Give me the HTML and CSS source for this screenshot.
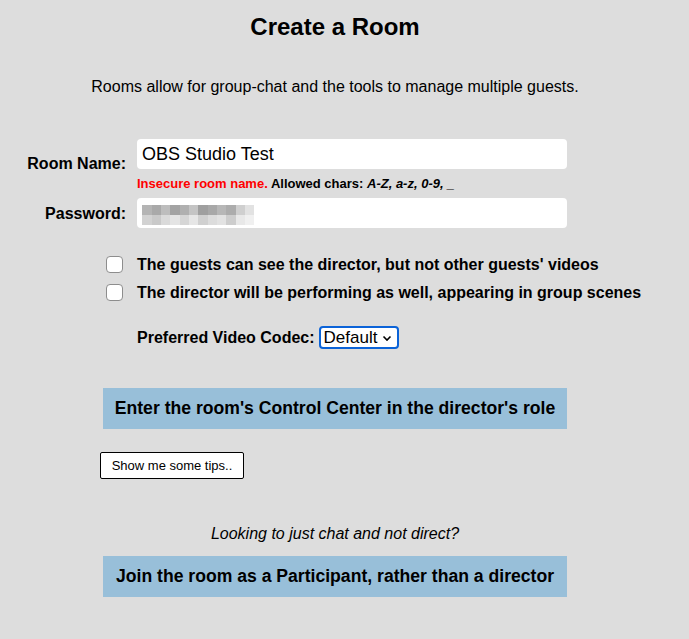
FILE: index.html
```html
<!DOCTYPE html>
<html lang="en">
<head>
    <meta charset="UTF-8">
    <meta name="viewport" content="width=device-width, initial-scale=1.0">
    <title>Create a Room</title>
    <link rel="stylesheet" href="styles.css">
</head>
<body>
    <div class="page">
        <h1>Create a Room</h1>
        <p class="intro">Rooms allow for group-chat and the tools to manage multiple guests.</p>

        <form action="#" id="form-room">
            <div class="fila">
                <label for="room" class="etiqueta etiqueta-room">Room Name:</label>
                <div class="campo">
                    <input type="text" id="room" name="room" value="OBS Studio Test">
                    <div class="aviso"><span class="rojo">Insecure room name.</span> Allowed chars: <i>A-Z, a-z, 0-9, _</i></div>
                </div>
            </div>
            <div class="fila">
                <label for="password" class="etiqueta etiqueta-pass">Password:</label>
                <div class="campo">
                    <input type="text" id="password" name="password" class="pass-oculto" aria-label="password (hidden)">
                </div>
            </div>

            <div class="opciones">
                <label class="check"><input type="checkbox" name="broadcast"> The guests can see the director, but not other guests' videos</label>
                <label class="check"><input type="checkbox" name="showdirector"> The director will be performing as well, appearing in group scenes</label>
            </div>

            <div class="codec">
                <label for="codec">Preferred Video Codec:</label>
                <select id="codec" name="codec">
                    <option>Default</option>
                    <option>VP8</option>
                    <option>VP9</option>
                    <option>H264</option>
                </select>
            </div>

            <button type="submit" class="btn-grande">Enter the room's Control Center in the director's role</button>
            <div class="tips"><button type="button" class="btn-tips">Show me some tips..</button></div>
        </form>

        <p class="pregunta">Looking to just chat and not direct?</p>
        <button type="button" class="btn-grande">Join the room as a Participant, rather than a director</button>
    </div>
</body>
</html>
```

FILE: styles.css
```css
*{
    margin: 0px;
    padding: 0px;
    box-sizing: border-box;
}
body{
    background: #dddddd;
    font-family: "Liberation Sans", Arial, Helvetica, sans-serif;
    color: #000;
}
.page{
    width: 670px;
    text-align: center;
}
h1{
    font-size: 24px;
    line-height: 28px;
    padding-top: 13px;
}
.intro{
    margin-top: 37px;
    font-size: 16px;
    line-height: 18px;
}

#form-room{
    margin-top: 43px;
    text-align: left;
}
.fila{
    display: grid;
    grid-template-columns: 126px 430px;
    column-gap: 11px;
}
.etiqueta{
    font-weight: bold;
    font-size: 16px;
    line-height: 18px;
    text-align: right;
}
.etiqueta-room{
    padding-top: 16px;
}
.etiqueta-pass{
    padding-top: 7px;
}
.campo input{
    display: block;
    width: 100%;
    height: 30px;
    border: none;
    border-radius: 4px;
    background-color: #fff;
    font-family: "Liberation Sans", Arial, sans-serif;
    font-size: 18px;
    padding: 0px 5px;
    color: #000;
    outline: none;
}
.aviso{
    margin: 7px 0px 6px;
    font-size: 13px;
    line-height: 16px;
    font-weight: bold;
}
.rojo{
    color: #ff0000;
}
.pass-oculto{
    background-image:
        linear-gradient(90deg, #b4b4b4 0 10px, #a9a9a9 10px 19px, #bdbdbd 19px 28px, #a3a3a3 28px 38px, #b0b0b0 38px 47px, #c4c4c4 47px 56px, #9f9f9f 56px 66px, #a8a8a8 66px 75px, #b7b7b7 75px 84px, #acacac 84px 94px, #cfcfcf 94px 103px, #e2e2e2 103px 112px),
        linear-gradient(90deg, #d2d2d2 0 10px, #c9c9c9 10px 19px, #dadada 19px 28px, #e4e4e4 28px 38px, #d6d6d6 38px 47px, #e6e6e6 47px 56px, #d0d0d0 56px 66px, #dcdcdc 66px 75px, #e2e2e2 75px 84px, #cdcdcd 84px 94px, #e8e8e8 94px 103px, #f0f0f0 103px 112px);
    background-size: 112px 10px, 112px 10px;
    background-position: 5px 7px, 5px 17px;
    background-repeat: no-repeat;
}

.opciones{
    margin-top: 28px;
    padding-left: 106px;
    display: flex;
    flex-direction: column;
    gap: 11px;
}
.check{
    display: flex;
    align-items: center;
    gap: 14px;
    font-weight: bold;
    font-size: 16px;
    line-height: 17px;
}
.check input{
    appearance: none;
    width: 17px;
    height: 17px;
    border: 1px solid #8d8d8d;
    border-radius: 4px;
    background: #fff;
    flex-shrink: 0;
}

.codec{
    margin-top: 25px;
    padding-left: 137px;
    display: flex;
    align-items: center;
    gap: 4px;
    font-weight: bold;
    font-size: 16px;
}
.codec select{
    appearance: none;
    height: 23px;
    padding: 0px 19px 0px 3px;
    border: 2px solid #0b63d8;
    border-radius: 4px;
    background: #fff url("data:image/svg+xml,%3Csvg xmlns='http://www.w3.org/2000/svg' width='10' height='8' viewBox='0 0 10 8'%3E%3Cpath d='M1.5 2.5 L5 6 L8.5 2.5' fill='none' stroke='%23000' stroke-width='1.6'/%3E%3C/svg%3E") no-repeat right 5px center;
    font-family: "Liberation Sans", Arial, sans-serif;
    font-size: 17px;
    color: #000;
}

.btn-grande{
    display: block;
    width: 464px;
    height: 41px;
    margin-left: 103px;
    border: none;
    background: #98bfd9;
    font-family: "Liberation Sans", Arial, sans-serif;
    font-weight: bold;
    font-size: 17.6px;
    color: #000;
}
#form-room .btn-grande{
    margin-top: 39px;
}
.tips{
    margin-top: 23px;
    padding-left: 100px;
}
.btn-tips{
    width: 144px;
    height: 27px;
    background: #fff;
    border: 1px solid #000;
    border-radius: 2px;
    font-family: "Liberation Sans", Arial, sans-serif;
    font-size: 13px;
    color: #000;
}
.pregunta{
    margin-top: 46px;
    margin-bottom: 13px;
    font-style: italic;
    font-size: 16px;
    line-height: 18px;
}
```
